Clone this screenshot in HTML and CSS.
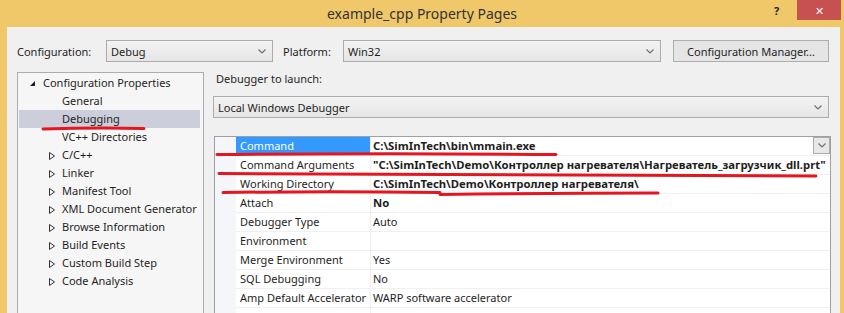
FILE: index.html
```html
<!DOCTYPE html>
<html lang="en">
<head>
    <meta charset="UTF-8">
    <title>example_cpp Property Pages</title>
    <link rel="stylesheet" href="styles.css">
</head>
<body>
<div class="window">
    <div class="titlebar">
        <span class="title">example_cpp Property Pages</span>
        <span class="help">?</span>
        <span class="close">✕</span>
    </div>

    <div class="client">
        <div class="config-row">
            <span class="lbl lbl-config">Configuration:</span>
            <div class="combo combo-config">
                <span>Debug</span>
                <svg class="chev" width="8" height="5" viewBox="0 0 8 5"><polyline points="0.5,0.5 4,4 7.5,0.5"/></svg>
            </div>
            <span class="lbl lbl-platform">Platform:</span>
            <div class="combo combo-platform">
                <span>Win32</span>
                <svg class="chev" width="8" height="5" viewBox="0 0 8 5"><polyline points="0.5,0.5 4,4 7.5,0.5"/></svg>
            </div>
            <div class="btn">Configuration Manager...</div>
        </div>

        <div class="main">
            <div class="tree">
                <div class="node root"><span class="tri-open"></span>Configuration Properties</div>
                <div class="node leaf">General</div>
                <div class="node leaf selected">Debugging</div>
                <div class="node leaf">VC++ Directories</div>
                <div class="node branch"><svg class="tri-closed" width="6" height="8" viewBox="0 0 6 8"><polygon points="0.5,0.5 5.5,4 0.5,7.5"/></svg>C/C++</div>
                <div class="node branch"><svg class="tri-closed" width="6" height="8" viewBox="0 0 6 8"><polygon points="0.5,0.5 5.5,4 0.5,7.5"/></svg>Linker</div>
                <div class="node branch"><svg class="tri-closed" width="6" height="8" viewBox="0 0 6 8"><polygon points="0.5,0.5 5.5,4 0.5,7.5"/></svg>Manifest Tool</div>
                <div class="node branch"><svg class="tri-closed" width="6" height="8" viewBox="0 0 6 8"><polygon points="0.5,0.5 5.5,4 0.5,7.5"/></svg>XML Document Generator</div>
                <div class="node branch"><svg class="tri-closed" width="6" height="8" viewBox="0 0 6 8"><polygon points="0.5,0.5 5.5,4 0.5,7.5"/></svg>Browse Information</div>
                <div class="node branch"><svg class="tri-closed" width="6" height="8" viewBox="0 0 6 8"><polygon points="0.5,0.5 5.5,4 0.5,7.5"/></svg>Build Events</div>
                <div class="node branch"><svg class="tri-closed" width="6" height="8" viewBox="0 0 6 8"><polygon points="0.5,0.5 5.5,4 0.5,7.5"/></svg>Custom Build Step</div>
                <div class="node branch"><svg class="tri-closed" width="6" height="8" viewBox="0 0 6 8"><polygon points="0.5,0.5 5.5,4 0.5,7.5"/></svg>Code Analysis</div>
            </div>

            <div class="page">
                <div class="launch-label">Debugger to launch:</div>
                <div class="combo combo-launch">
                    <span>Local Windows Debugger</span>
                    <svg class="chev" width="8" height="5" viewBox="0 0 8 5"><polyline points="0.5,0.5 4,4 7.5,0.5"/></svg>
                </div>

                <div class="grid">
                    <div class="row">
                        <div class="gutter"></div>
                        <div class="name current">Command</div>
                        <div class="value bold">C:\SimInTech\bin\mmain.exe
                            <span class="drop"><svg width="8" height="5" viewBox="0 0 8 5"><polyline points="0.5,0.5 4,4 7.5,0.5"/></svg></span>
                        </div>
                    </div>
                    <div class="row">
                        <div class="gutter"></div>
                        <div class="name">Command Arguments</div>
                        <div class="value bold">"C:\SimInTech\Demo\Контроллер нагревателя\Нагреватель_загрузчик_dll.prt"</div>
                    </div>
                    <div class="row">
                        <div class="gutter"></div>
                        <div class="name">Working Directory</div>
                        <div class="value bold">C:\SimInTech\Demo\Контроллер нагревателя\</div>
                    </div>
                    <div class="row">
                        <div class="gutter"></div>
                        <div class="name">Attach</div>
                        <div class="value bold">No</div>
                    </div>
                    <div class="row">
                        <div class="gutter"></div>
                        <div class="name">Debugger Type</div>
                        <div class="value">Auto</div>
                    </div>
                    <div class="row">
                        <div class="gutter"></div>
                        <div class="name">Environment</div>
                        <div class="value"></div>
                    </div>
                    <div class="row">
                        <div class="gutter"></div>
                        <div class="name">Merge Environment</div>
                        <div class="value">Yes</div>
                    </div>
                    <div class="row">
                        <div class="gutter"></div>
                        <div class="name">SQL Debugging</div>
                        <div class="value">No</div>
                    </div>
                    <div class="row">
                        <div class="gutter"></div>
                        <div class="name">Amp Default Accelerator</div>
                        <div class="value">WARP software accelerator</div>
                    </div>
                    <div class="row">
                        <div class="gutter"></div>
                        <div class="name"></div>
                        <div class="value"></div>
                    </div>
                </div>
            </div>
        </div>
    </div>

    <!-- red hand-drawn annotations over the dialog -->
    <svg class="marks" width="844" height="313" viewBox="0 0 844 313">
        <path d="M43,129 Q95,127.5 144,128.5"/>
        <path d="M217,154.5 Q390,153 556,154.5"/>
        <path d="M219,173.5 Q520,175 816,176"/>
        <path d="M223,192.5 Q330,191 440,192.5"/>
        <path d="M440,194.5 Q560,193 658,193"/>
    </svg>
</div>
</body>
</html>
```

FILE: styles.css
```css
body {
    margin: 0;
    font-family: "Noto Sans", sans-serif;
    font-size: 11px;
    color: #1e1e1e;
}
.window {
    position: relative;
    width: 844px;
    height: 313px;
    overflow: hidden;
    background: #f0c86a;
}
.titlebar {
    height: 27px;
    display: flex;
    align-items: center;
    justify-content: center;
    position: relative;
}
.title {
    font-size: 14px;
    color: #333;
}
.help {
    position: absolute;
    left: 774px;
    top: 3px;
    font-size: 11px;
    font-weight: bold;
    color: #222;
}
.close {
    position: absolute;
    left: 797px;
    top: 0;
    width: 44px;
    height: 20px;
    background: #c75050;
    color: #fff;
    font-size: 11px;
    display: flex;
    align-items: center;
    justify-content: center;
}
.client {
    margin: 0 4px 0 7px;
    height: 286px;
    background: #f0f0f0;
    padding: 13px 0 0 10px;
    box-sizing: border-box;
}
.config-row {
    display: flex;
    align-items: center;
    height: 22px;
}
.lbl-config {
    width: 89px;
}
.lbl-platform {
    margin-left: 10px;
    width: 60px;
}
.combo {
    height: 22px;
    box-sizing: border-box;
    border: 1px solid #acacac;
    background: linear-gradient(#f2f2f2, #e6e6e6);
    display: flex;
    align-items: center;
    justify-content: space-between;
    padding: 0 6px 0 4px;
}
.chev polyline, .drop polyline {
    fill: none;
    stroke: #707070;
    stroke-width: 1.2;
}
.combo-config {
    width: 167px;
}
.combo-platform {
    width: 318px;
}
.btn {
    margin-left: 12px;
    width: 156px;
    height: 22px;
    box-sizing: border-box;
    border: 1px solid #adadad;
    background: #e5e5e5;
    display: flex;
    align-items: center;
    justify-content: center;
}
.main {
    display: flex;
    margin-top: 10px;
}
.tree {
    width: 187px;
    height: 260px;
    box-sizing: border-box;
    border: 1px solid #abadb3;
    background: #f6f6f6;
    padding-top: 1px;
}
.node {
    height: 18px;
    line-height: 18px;
    position: relative;
    white-space: nowrap;
}
.root {
    padding-left: 25px;
}
.leaf, .branch {
    padding-left: 44px;
}
.selected {
    background: #cccedb;
    margin: 0 3px 0 1px;
    padding-left: 43px;
}
.tri-open {
    position: absolute;
    left: 12px;
    top: 7px;
    width: 0;
    height: 0;
    border-left: 5px solid transparent;
    border-bottom: 5px solid #1e1e1e;
}
.tri-closed {
    position: absolute;
    left: 31px;
    top: 6px;
}
.tri-closed polygon {
    fill: none;
    stroke: #333;
    stroke-width: 1;
}
.page {
    margin-left: 9px;
    width: 616px;
}
.launch-label {
    height: 16px;
    line-height: 14px;
    padding: 0 0 0 3px;
    margin-bottom: 8px;
}
.combo-launch {
    width: 616px;
}
.grid {
    margin: 18px 0 0 1px;
    width: 615px;
    border: 1px solid #a0a0a0;
    border-bottom: none;
    background: #fff;
}
.row {
    display: flex;
    height: 19px;
}
.gutter {
    width: 21px;
    background: #f5f6fa;
}
.name, .value {
    height: 19px;
    box-sizing: border-box;
    border-bottom: 1px solid #f0f0f3;
    line-height: 18px;
    white-space: nowrap;
    overflow: hidden;
}
.name {
    width: 135px;
    padding-left: 4px;
    border-right: 1px solid #f0f0f3;
}
.name.current {
    background: #3399ff;
    color: #fff;
}
.value {
    flex: 1;
    padding-left: 2px;
    position: relative;
}
.bold {
    font-weight: bold;
    font-size: 11.3px;
}
.drop {
    position: absolute;
    right: 0;
    top: 0;
    width: 17px;
    height: 17px;
    box-sizing: border-box;
    border: 1px solid #acacac;
    background: #e8e8e8;
    display: flex;
    align-items: center;
    justify-content: center;
}
.marks {
    position: absolute;
    left: 0;
    top: 0;
    pointer-events: none;
}
.marks path {
    fill: none;
    stroke: #e5161f;
    stroke-width: 3;
    stroke-linecap: round;
}
```
